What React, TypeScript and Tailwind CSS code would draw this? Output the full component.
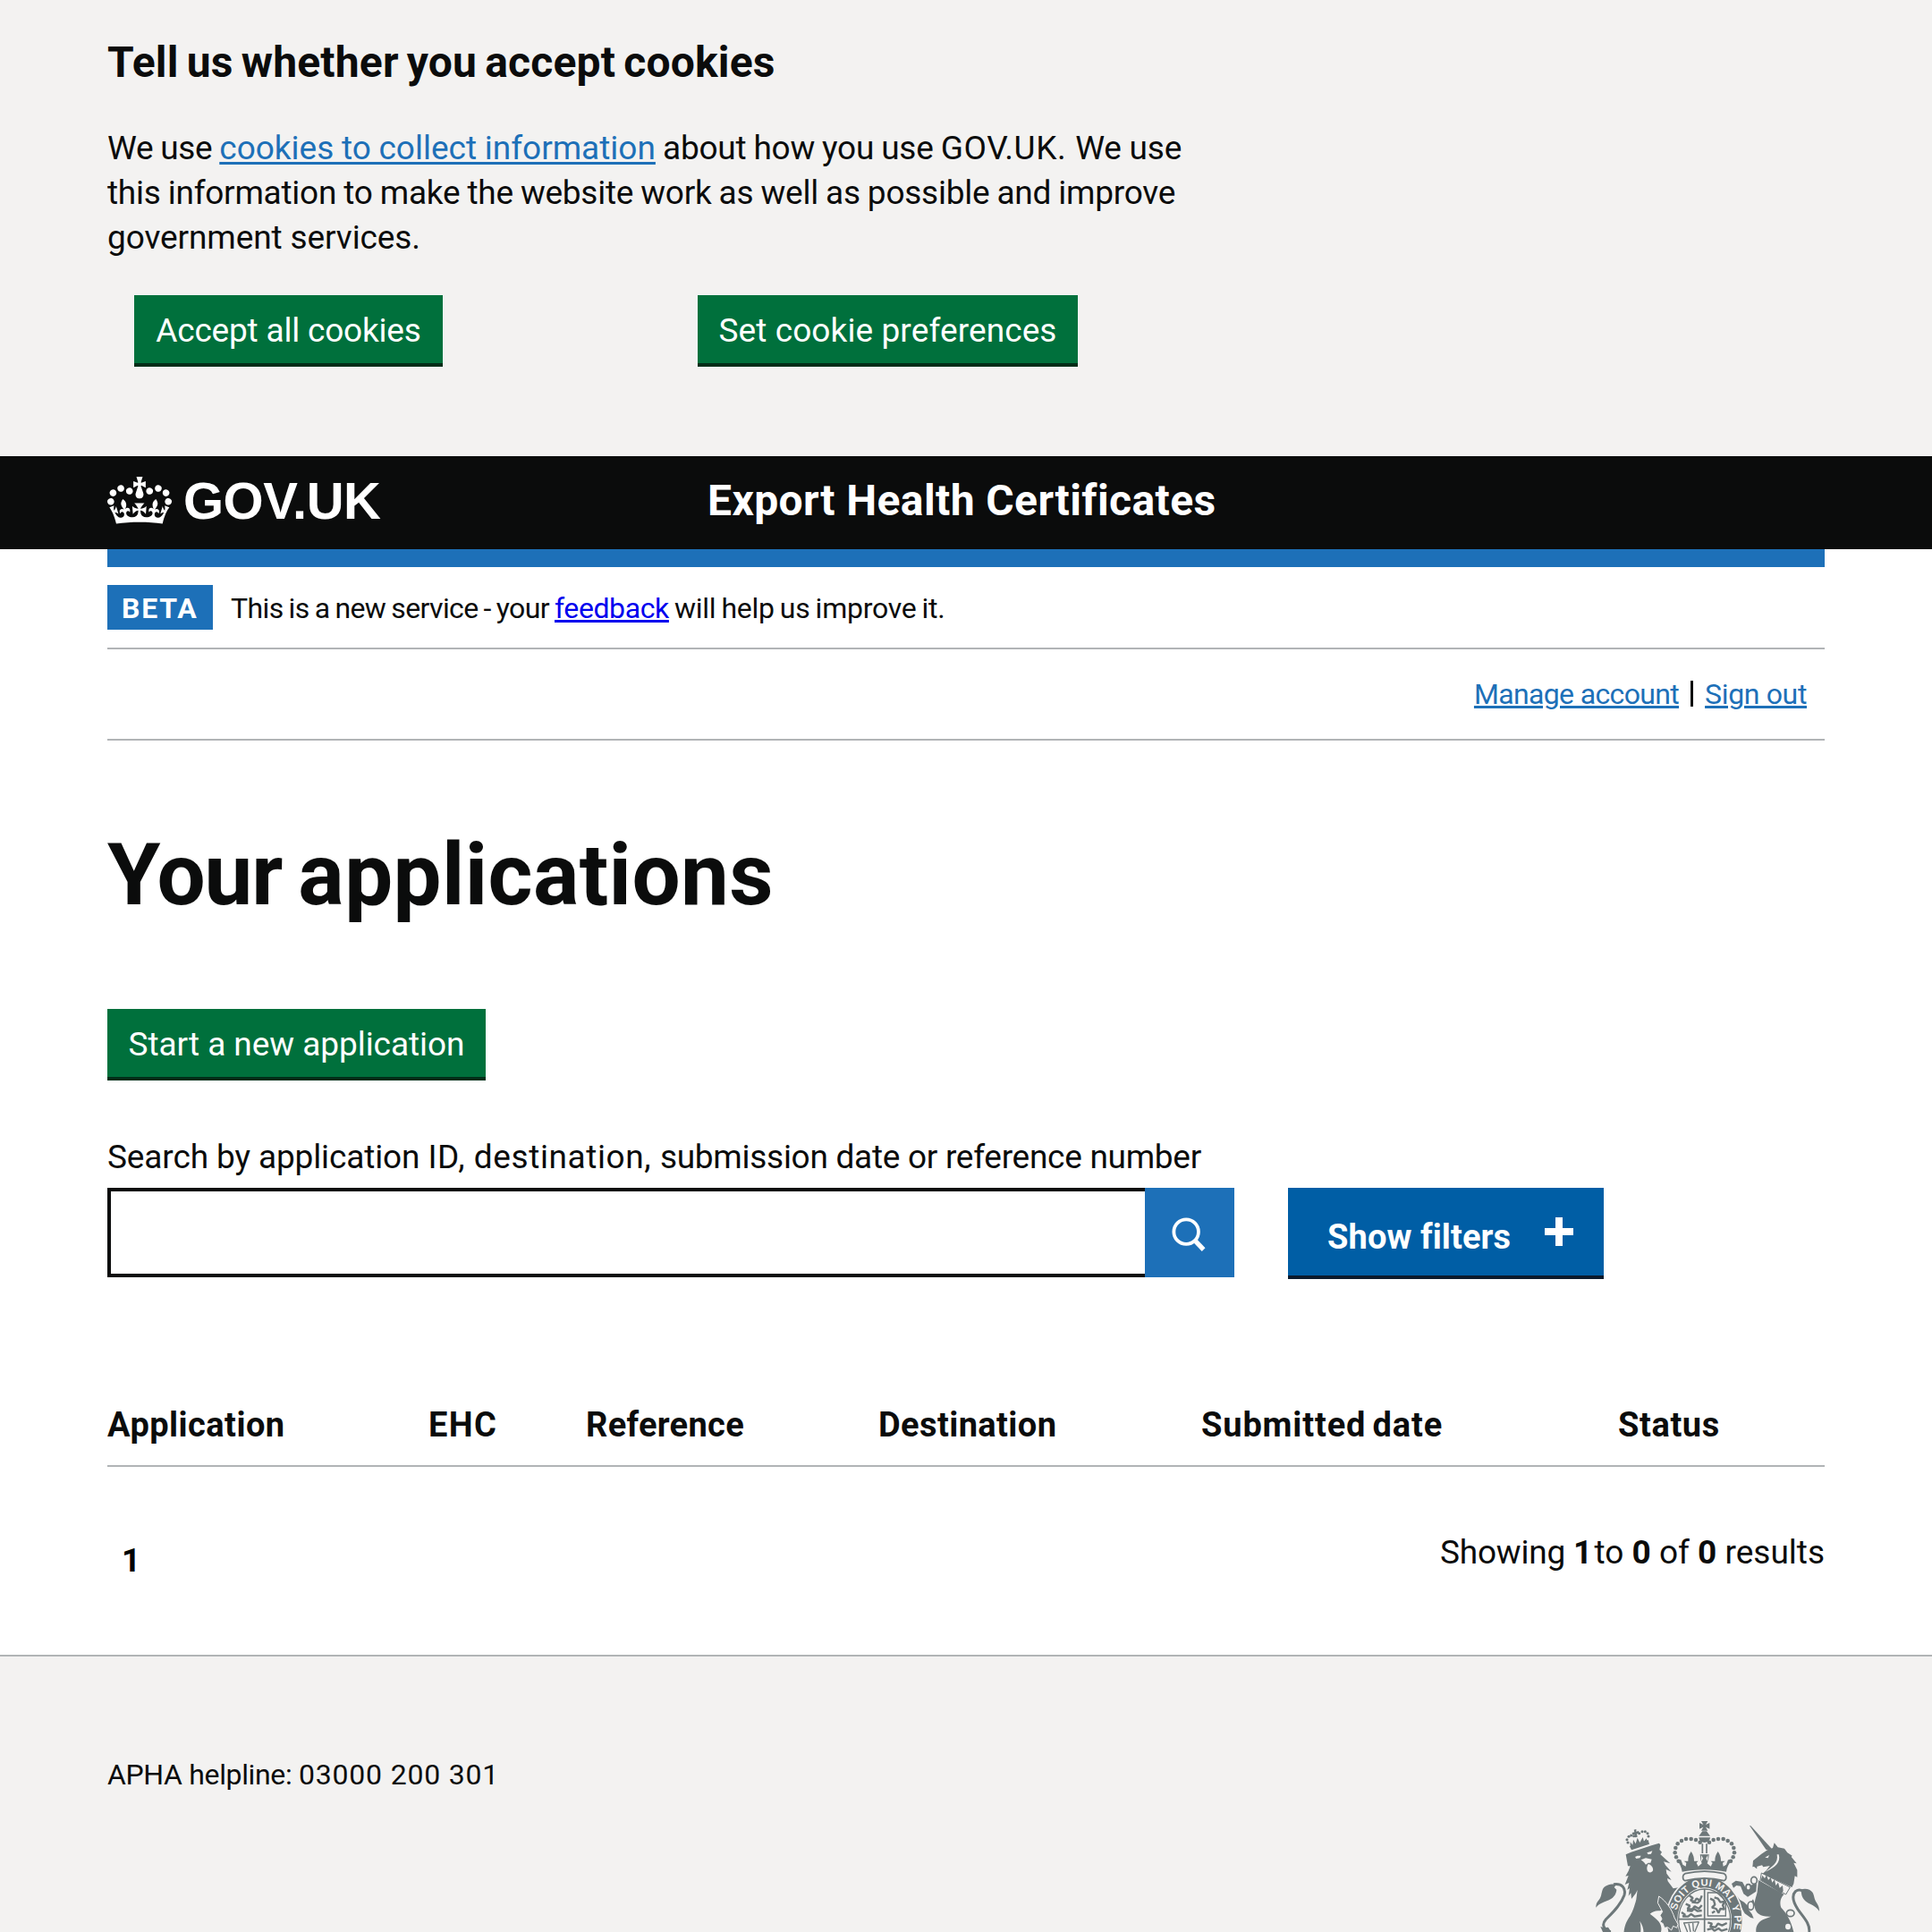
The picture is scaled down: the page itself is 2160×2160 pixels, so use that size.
import type { ReactNode } from "react";

function Crown() {
  return (
    <svg className="h-[53px] w-[72px]" viewBox="0 0 132 97" fill="currentColor" aria-hidden="true">
      <path
        fillRule="evenodd"
        d="M25 30.2c3.5 1.5 7.7-.2 9.1-3.7 1.5-3.6-.2-7.8-3.9-9.2-3.6-1.4-7.6.3-9.1 3.9-1.4 3.5.3 7.5 3.9 9zM9 39.5c3.6 1.5 7.8-.2 9.2-3.7 1.5-3.6-.2-7.8-3.9-9.1-3.6-1.5-7.6.2-9.1 3.8-1.4 3.5.3 7.5 3.8 9zM4.4 57.2c3.5 1.5 7.7-.2 9.1-3.8 1.5-3.6-.2-7.7-3.9-9.1-3.5-1.5-7.6.3-9.1 3.8-1.4 3.5.3 7.6 3.9 9.1zm38.3-21.4c3.5 1.5 7.7-.2 9.1-3.8 1.5-3.6-.2-7.7-3.9-9.1-3.6-1.5-7.6.3-9.1 3.8-1.3 3.6.4 7.7 3.9 9.1zm64.4-5.6c-3.6 1.5-7.8-.2-9.1-3.7-1.5-3.6.2-7.8 3.8-9.2 3.6-1.4 7.7.3 9.2 3.9 1.3 3.5-.4 7.5-3.9 9zm15.9 9.3c-3.6 1.5-7.7-.2-9.1-3.7-1.5-3.6.2-7.8 3.7-9.1 3.6-1.5 7.7.2 9.2 3.8 1.5 3.5-.3 7.5-3.8 9zm4.7 17.7c-3.6 1.5-7.8-.2-9.2-3.8-1.5-3.6.2-7.7 3.9-9.1 3.6-1.5 7.7.3 9.2 3.8 1.3 3.5-.4 7.6-3.9 9.1zM89.3 35.8c-3.6 1.5-7.8-.2-9.2-3.8-1.4-3.6.2-7.7 3.9-9.1 3.6-1.5 7.7.3 9.2 3.8 1.4 3.6-.3 7.7-3.9 9.1zM69.7 17.7l8.9 4.7V9.3l-8.9 2.8c-.2-.3-.5-.6-.9-.9L72.4 0H59.6l3.5 11.2c-.3.3-.6.5-.9.9l-8.8-2.8v13.1l8.8-4.7c.3.3.6.7.9.9l-5 15.4v.1c-.2.8-.4 1.6-.4 2.4 0 4.1 3.1 7.5 7 8.1h.2c.3 0 .7.1 1 .1.4 0 .7 0 1-.1h.2c4-.6 7.1-4.1 7.1-8.1 0-.8-.1-1.7-.4-2.4V34l-5.1-15.4c.4-.2.7-.6 1-.9zM66 92.8c16.9 0 32.8 1.1 47.1 3.2 4-16.9 8.9-26.7 14-33.5l-9.6-3.4c1 4.9 1.1 7.2 0 10.2-1.5-1.4-3-4.3-4.2-8.7L108.6 76c2.8-2 5-3.2 7.5-3.3-4.4 9.4-10 11.9-13.6 11.2-4.3-.8-6.3-4.6-5.6-7.9 1-4.7 5.7-5.9 8-.5 4.3-8.7-3-11.4-7.6-8.8 7.1-7.2 7.9-13.5 2.1-21.1-8 6.1-8.1 12.3-4.5 20.8-4.7-5.4-12.1-2.5-9.5 6.2 3.4-5.2 7.9-2 7.2 3.1-.6 4.3-6.4 7.8-13.5 7.2-10.3-.9-10.9-8-11.2-13.8 2.5-.5 7.1 1.8 11 7.3L80.2 60c-4.1 4.4-8 5.3-12.3 5.4 1.4-4.4 8-11.6 8-11.6H55.5s6.4 7.2 7.9 11.6c-4.2-.1-8-1-12.3-5.4l1.4 16.4c3.9-5.5 8.5-7.7 10.9-7.3-.3 5.8-.9 12.8-11.1 13.8-7.2.6-12.9-2.9-13.5-7.2-.7-5 3.8-8.3 7.1-3.1 2.7-8.7-4.6-11.6-9.4-6.2 3.7-8.5 3.6-14.7-4.6-20.8-5.8 7.6-5 13.9 2.2 21.1-4.7-2.6-11.9.1-7.7 8.8 2.3-5.5 7.1-4.2 8.1.5.7 3.3-1.3 7.1-5.7 7.9-3.5.7-9-1.8-13.5-11.2 2.5.1 4.7 1.3 7.5 3.3l-4.7-15.4c-1.2 4.4-2.7 7.2-4.3 8.7-1.1-3-.9-5.3 0-10.2l-9.5 3.4c5 6.9 9.9 16.7 14 33.5 14.8-2.1 30.8-3.2 47.7-3.2z"
      />
    </svg>
  );
}

const BEADS: [number, number][] = [
  [422, 149], [408, 141], [392, 138], [375, 138], [360, 144], [347, 154], [340, 168], [338, 184], [342, 199], [350, 212],
];

function Crest() {
  return (
    <svg className="h-[126px] w-[250px] shrink-0" viewBox="72 72 750 378" fill="#6d7779" aria-hidden="true">
      {/* lion tail */}
      <path d="M122 450c-26-10-30-26-16-42 22-22 50-48 62-82 6-24-8-40-36-36" fill="none" stroke="#6d7779" strokeWidth="9" />
      <path d="M142 290c-20-2-40 2-47 18-5 14-3 22-12 34-6 8-10 12-10 26 10-12 20-16 36-22 22-8 32-22 33-38l-8-8z" />
      <path d="M88 432l12 4 14-2 10 16H96z" />
      {/* unicorn tail */}
      <path d="M788 450c4-28-20-50-38-76-14-22-22-46-8-60 8-6 18-6 26 0" fill="none" stroke="#6d7779" strokeWidth="9" />
      <path d="M760 308c14-6 32-2 40 10 6 12 4 20 12 32 6 8 10 18 10 30-8-12-18-18-30-24-18-8-28-20-30-36z" />

      {/* lion */}
      <path d="M173 190l18-8 68-22 26-8 4 6-3 16 8 8-5 8 33 30-22-6 6 12 20 22-18-8 2 14 16 22-14-6 2 10 18 24 18-3-14 14-4 8 12-4-10 16 6 12c14 22 24 42 28 68l4 22-14-8-4 12-8-10-10 4-2-14-10 0 2-14-8-4 8-12-6-12-10 14-2-18-10 14-2-14-8 4c-14-2-24 2-34 10 18 14 36 26 38 46 1 8 0 14-4 22h-56c2-14-2-28-12-44 4 16 4 30 2 44h-56c2-30 10-44 22-62 10-18 14-32 20-54l4-32-6 12-14 18-2-20-8 10 4-26-8 6 6-24-14 6 12-30-10 2 10-18 6-16-8 0z" />
      <g fill="#f3f2f1">
        <path d="M204 198l8-4 12 0-4 8-12 2zM244 184l12-4 6-2-4 10-10 2zM224 208l16-6 20 4-4 12-8 0-8 6-6-8z" />
        <path d="M248 222c10 2 18 12 16 22-4 8-14 8-18 2-4-8-2-16 2-24z" />
      </g>
      <path d="M186 163l62-22 4 14-60 20z" />
      {[[180, 150], [177, 140], [183, 130], [191, 126], [200, 128], [218, 119], [228, 113], [238, 113], [246, 119], [249, 129]].map(([x, y]) => (
        <circle key={x} cx={x} cy={y} r="4.6" />
      ))}
      <path d="M200 107l8-2 0 8 8-2 2 8-8 2 2 10-8 2-2-10-6 2-2-8 8-2zM188 164l0-16 8 10 2-18 8 14 6-20 8 16 10-18 4 14 8-10 6 20z" />

      {/* unicorn */}
      <path d="M588 93l4 1 70 76-10 8-10-6z" />
      <path d="M600 211l28-23 18-12 20-8 5-17 12 15 22 4 10 14 16 10-3 4 18 22-10-2 12 24 0 24-8-4-4 26-6 12-92-42-10 0 16-14 12-16-22 4-4-6-16 4-4 8-4-8-8 2z" />
      <path d="M600 218l22-2-14 10 6 12-10-6z" />
      <path d="M640 200l14-8-4 10zM686 190c8 26-12 44-44 58 20-18 44-28 38-58z" fill="#f3f2f1" />
      <path d="M628 252l96 48-14 24-86-48z" fill="#f3f2f1" stroke="#6d7779" strokeWidth="3" />
      <path d="M626 276l5-16 8 10 6-12 6 18 8-10 5 18 8-10 4 20 8-10 5 18 10-8 2 18-6 10z" />
      <path d="M618 276l86 48c-12 10-16 28-10 44 16 16 34 44 42 82H610c-2-20 8-34 24-42l26-10c-34 2-50-10-54-28-4-20 4-36 8-54z" />
      <path d="M610 314l-28 18-14-10-10-26-14-2-10 8-6-14 14-10 22 4 12 22 20-12 16-4zM608 360l-24 14 12 16 6 14-10-2-20-14-16-28-12-16-8-10 10-4 10 12 14 8 12 12 18-22z" />
      <g fill="#f3f2f1" stroke="#6d7779" strokeWidth="5">
        <ellipse cx="603" cy="277" rx="10" ry="12" />
        <ellipse cx="584" cy="300" rx="8" ry="10" />
        <ellipse cx="592" cy="362" rx="10" ry="14" />
        <ellipse cx="725" cy="387" rx="13" ry="11" />
        <ellipse cx="717" cy="432" rx="9" ry="10" stroke="none" />
      </g>

      {/* garter and shield */}
      <ellipse cx="437" cy="410" rx="128" ry="148" stroke="#f3f2f1" strokeWidth="5" />
      <ellipse cx="437" cy="410" rx="91" ry="109" fill="#f3f2f1" />
      <path id="garter" d="M352 470A99 117 0 1 1 528 462" fill="none" />
      <text fill="#f3f2f1" fontFamily="'Liberation Sans', sans-serif" fontWeight="700" fontSize="34" letterSpacing="1">
        <textPath href="#garter" startOffset="94">SOIT QUI MAL Y PE</textPath>
      </text>
      <g fill="none" stroke="#6d7779" strokeWidth="5">
        <ellipse cx="437" cy="410" rx="87" ry="104" strokeWidth="4" />
        <path d="M437 306v144M350 407h176" />
        <path d="M448 318h38l22 30v48h-60z" strokeWidth="4" />
      </g>
      <g fill="none" stroke="#6d7779" strokeWidth="7" strokeLinejoin="bevel">
        <path d="M386 328l12 8-8 8 14 4 6-10 12 6 6-16M394 350l20 2 10-8M374 356l14 6-8 10 16 2 8-10 14 8 10-12M378 378l16 2 8-8 12 8 14-2M360 384l12 8-8 6 18 0 10-8 12 8 24-4" />
        <path d="M456 338l12 6 4 14-10 10 14 4 8 14 6-14 14 2-6-14 8-12-16 2-8-12-12-4M462 386l10-6" />
        <path d="M366 420l52-4-8 20-6 14M368 420l12 30M384 422l6 28M398 420l2 28" strokeWidth="4" />
        <path d="M448 418l14 4-6 10 18 2 8-12 14 6 16-8M446 442l16-4 8 8 14-8 10 8 20-6" />
      </g>

      {/* lion's foreleg resting on the garter */}
      <path
        d="M284 330c24 16 44 44 52 72l12 22-4 12-12-6-6 14-12-10-12 2-4-14-10-6 6-10-6-12 8-12-16-30z"
        stroke="#f3f2f1" strokeWidth="3"
      />

      {/* central crown */}
      <path d="M426 78h22l-7 12 13-6v20l-13-6 7 12h-22l7-12-13 6V84l13 6zM430 112h14l12 16h-38z" />
      <path d="M418 133h38c-1 12-10 17-19 17s-18-5-19-17z" />
      <path d="M430 154v32M444 154v32" stroke="#6d7779" strokeWidth="5" />
      {BEADS.map(([x, y]) => (
        <g key={x}>
          <circle cx={x} cy={y} r="6.8" />
          <circle cx={875 - x} cy={y} r="6.8" />
        </g>
      ))}
      <path d="M344 208l14 0 6 16 10 6 2-12-8-6 14 0c0-12 2-20 10-32 8 12 10 20 10 32l14 0-6 6 6 12 12-10-4-12-2-18h30l-2 18-4 12 12 10 6-12-6-6 14 0c0-12 2-20 10-32 8 12 10 20 10 32l14 0-8 6 2 12 10-6 6-16 14 0c-12 14-18 24-20 40-42-10-106-10-148 0-2-16-8-26-18-40z" />
      <path d="M426 192l6 11-6 11M448 192l-6 11 6 11" fill="#f3f2f1" />
      <path d="M372 254c42-10 88-10 130 0 10 4 10 20 0 24-40-10-90-10-130 0-10-4-10-20 0-24z" fill="#f3f2f1" stroke="#6d7779" strokeWidth="5" />
    </svg>
  );
}

function GreenButton({ className, children }: { className: string; children: ReactNode }) {
  return (
    <button className={`h-[80px] border-b-4 border-[#002d18] bg-[#00703c] pt-[4px] text-center text-[37px] leading-[50px] text-white ${className}`}>
      {children}
    </button>
  );
}

const COLUMNS = [
  { label: "Application", cls: "w-[359px] tracking-[0.45px]" },
  { label: "EHC", cls: "w-[176px] tracking-[1.4px]" },
  { label: "Reference", cls: "w-[327px] tracking-[0.3px]" },
  { label: "Destination", cls: "w-[361px] tracking-[0.4px]" },
  { label: "Submitted date", cls: "w-[466px] tracking-[0.85px] [word-spacing:-3px]" },
  { label: "Status", cls: "tracking-[0.6px]" },
];

export default function App() {
  return (
    <div className="flex h-[2160px] w-[2160px] flex-col overflow-hidden bg-white font-['Roboto',sans-serif] text-[#0b0c0c]">
      <section className="h-[510px] shrink-0 bg-[#f3f2f1] px-[120px] pt-10">
        <h2 className="text-[48px] leading-[60px] font-bold tracking-[0.18px] [word-spacing:-3px]">Tell us whether you accept cookies</h2>
        <p className="mt-[41px] text-[37px] leading-[50px] whitespace-nowrap">
          <span className="block">
            <span className="tracking-[-0.3px] [word-spacing:-1px]">We use </span>
            <a className="text-[#1d70b8] underline decoration-[3px] underline-offset-[3px] [word-spacing:-0.5px]" href="#cookies">cookies to collect information</a>
            <span className="tracking-[-0.25px] [word-spacing:-0.8px]"> about how you use </span>
            <span className="tracking-[0.6px]">GOV.UK. </span>
            <span className="tracking-[-0.2px]">We use</span>
          </span>
          <span className="block tracking-[-0.25px] [word-spacing:-0.8px]">this information to make the website work as well as possible and improve</span>
          <span className="block tracking-[-0.1px]">government services.</span>
        </p>
        <div className="mt-[39px] flex pl-[30px]">
          <GreenButton className="mr-[285px] w-[345px] tracking-[-0.2px]">Accept all cookies</GreenButton>
          <GreenButton className="w-[425px] tracking-[0.1px]">Set cookie preferences</GreenButton>
        </div>
      </section>

      <header className="flex h-[104px] shrink-0 items-start bg-[#0b0c0c] px-[120px] text-white">
        <a className="flex w-[671px]" href="#home">
          <span className="mt-[23px]"><Crown /></span>
          <span className="mt-[20px] ml-[13px] font-['Liberation_Sans',sans-serif] text-[58px] leading-[60px] font-bold tracking-[-0.5px]">GOV.UK</span>
        </a>
        <span className="mt-5 text-[48px] leading-[60px] font-bold tracking-[0.4px]">Export Health Certificates</span>
      </header>

      <main className="flex grow flex-col px-[120px]">
        <div className="h-5 bg-[#1d70b8]" />
        <div className="flex h-[92px] items-start border-b-2 border-[#b1b4b6] pt-5 text-[32px] leading-[50px]">
          <strong className="w-[118px] bg-[#1d70b8] pt-[2px] pl-4 leading-[48px] font-bold tracking-[1.8px] text-white">BETA</strong>
          <span className="ml-5 pt-px">
            <span className="tracking-[-0.62px] [word-spacing:-1.3px]">This is a new service - your </span>
            <a className="tracking-[-0.4px] text-[#0000ee] underline decoration-[3px] underline-offset-[2px]" href="#feedback">feedback</a>
            <span className="tracking-[-0.25px] [word-spacing:-1.6px]"> will help us improve it.</span>
          </span>
        </div>
        <nav className="flex h-[102px] items-start justify-end border-b-2 border-[#b1b4b6] pt-[25px] pr-5 text-[32px] leading-[50px]">
          <a className="tracking-[-0.65px] text-[#1d70b8] underline decoration-[3px] underline-offset-[2px]" href="#account">Manage account</a>
          <span className="mt-[10px] mr-[13px] ml-[13px] h-[29px] w-[3px] bg-[#0b0c0c]" />
          <a className="tracking-[-0.35px] text-[#1d70b8] underline decoration-[3px] underline-offset-[2px]" href="#signout">Sign out</a>
        </nav>

        <h1 className="mt-[100px] text-[96px] leading-[100px] font-bold [word-spacing:-5px]">
          <span className="tracking-[-1px]">Your </span>
          <span className="tracking-[0.4px]">applications</span>
        </h1>
        <GreenButton className="mt-[100px] w-[423px] tracking-[-0.05px]">Start a new application</GreenButton>

        <label className="mt-[61px] text-[37px] leading-[50px]">
          <span className="tracking-[-0.12px]">Search by application </span>
          <span className="tracking-[0.6px]">ID, destination, </span>
          <span className="tracking-[-0.28px]">submission date or reference number</span>
        </label>
        <div className="mt-[9px] flex h-[102px] items-start">
          <input className="h-[100px] w-[1160px] border-4 border-r-0 border-[#0b0c0c] bg-white outline-none" />
          <button className="flex h-[100px] w-[100px] items-center justify-center bg-[#1d70b8]">
            <svg className="mt-[4px] mr-[2px] h-[38px] w-[38px]" viewBox="0 0 40 40" fill="none" stroke="#fff" aria-hidden="true">
              <circle cx="17" cy="17" r="14.5" strokeWidth="4" />
              <path d="M27 27l10.500 11" strokeWidth="5.5" />
            </svg>
          </button>
          <button className="ml-[60px] flex h-[102px] w-[353px] items-start border-b-4 border-[#0b1a2c] bg-[#005ea5] pl-[44px] text-white">
            <span className="mt-[30px] text-[38px] leading-[50px] font-bold tracking-[0.1px]">Show filters</span>
            <svg className="mt-[33px] ml-[38px] h-8 w-8" viewBox="0 0 32 32" fill="#fff" aria-hidden="true">
              <path d="M12 0h8v12h12v8H20v12h-8V20H0v-8h12z" />
            </svg>
          </button>
        </div>

        <div className="mt-[138px] flex h-[72px] border-b-2 border-[#b1b4b6] text-[38px] leading-[50px] font-bold whitespace-nowrap">
          {COLUMNS.map((c) => (
            <span key={c.label} className={c.cls}>{c.label}</span>
          ))}
        </div>
        <div className="mt-[71px] flex justify-between text-[37px] leading-[50px]">
          <span className="mt-[9px] ml-4 text-[37px] font-bold text-black">1</span>
          <span>
            <span className="tracking-[-0.2px]">Showing </span>
            <b>1</b>
            <span className="[word-spacing:-7px]"> to</span> <b>0</b> of <b>0</b> results
          </span>
        </div>
      </main>

      <footer className="flex h-[310px] shrink-0 items-start justify-between border-t-2 border-[#b1b4b6] bg-[#f3f2f1] pr-[126px] pl-[120px]">
        <p className="mt-[107px] text-[32px] leading-[50px]">
          <span className="tracking-[-0.35px]">APHA helpline: </span>
          <span className="tracking-[0.8px]">03000 200 301</span>
        </p>
        <div className="mt-[182px]"><Crest /></div>
      </footer>
    </div>
  );
}
